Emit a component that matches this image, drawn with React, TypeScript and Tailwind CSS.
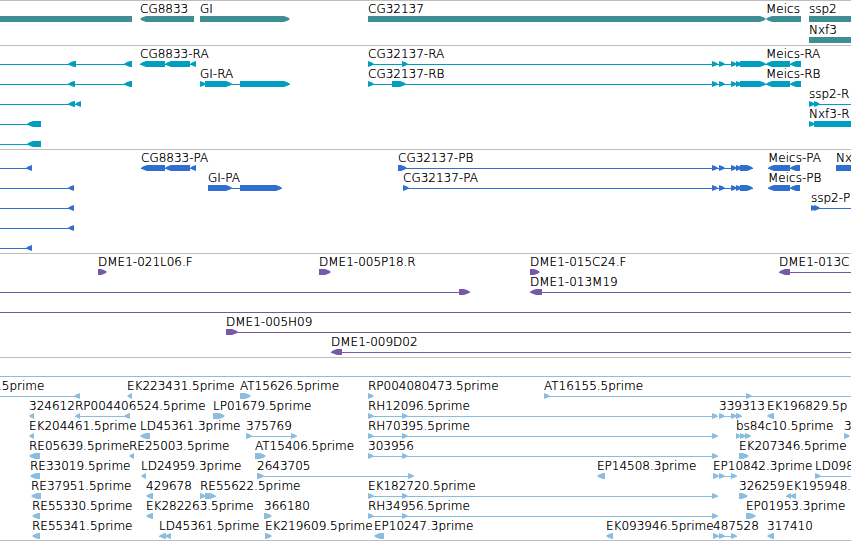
import { memo } from "react";
import clsx from "clsx";

type Exon = [start: number, end: number];

type Feature = {
  name?: string;
  strand: "<" | ">";
  exons: Exon[];
  // the part of the feature that runs past its outermost exons
  from?: number;
  to?: number;
  labelAt?: number;
};

type TrackData = {
  id: string;
  color: string;
  className?: string;
  rows: Feature[][];
};

// anything beyond the visible region is clipped by the row
const LEFT = -20;
const RIGHT = 4000;
const HEAD = 6;

const fwd = (name: string, ...exons: Exon[]): Feature => ({
  name,
  strand: ">",
  exons,
});
const rev = (name: string, ...exons: Exon[]): Feature => ({
  name,
  strand: "<",
  exons,
});
const fromLeft = (...exons: Exon[]): Feature => ({
  strand: "<",
  exons,
  from: LEFT,
});
const through: Feature = { strand: ">", exons: [], from: LEFT, to: RIGHT };

const spliced: Exon[] = [[712, 718], [719, 725], [731, 737], [736, 742]];
const clone: Exon[] = [[368, 374], [402, 408], [712, 718]];

const tracks: TrackData[] = [
  {
    id: "Genes",
    color: "text-[#3e8e93]",
    className: "gap-px",
    rows: [
      [
        { strand: ">", exons: [[LEFT, 132]] },
        rev("CG8833", [140, 194]),
        fwd("GI", [200, 290]),
        fwd("CG32137", [368, 766]),
        rev("Meics", [766, 801]),
        fwd("ssp2", [809, RIGHT]),
      ],
      [fwd("Nxf3", [809, RIGHT])],
    ],
  },
  {
    id: "Transcripts",
    color: "text-[#009fc0]",
    rows: [
      [
        fromLeft([68, 76], [124, 132]),
        rev("CG8833-RA", [140, 165], [165, 190], [190, 196]),
        fwd("CG32137-RA", [368, 374], [402, 408], ...spliced, [740, 766]),
        rev("Meics-RA", [766, 790], [790, 801]),
      ],
      [
        fromLeft([68, 75], [124, 132]),
        fwd("GI-RA", [200, 206], [205, 232], [240, 290]),
        fwd("CG32137-RB", [368, 374], [392, 406], ...spliced, [740, 766]),
        rev("Meics-RB", [766, 790], [790, 801]),
      ],
      [
        fromLeft([68, 75], [75, 81]),
        { ...fwd("ssp2-R", [809, 815], [814, 820]), to: RIGHT },
      ],
      [
        fromLeft([27, 41]),
        fwd("Nxf3-R", [809, 815], [814, RIGHT]),
      ],
      [fromLeft([27, 41])],
    ],
  },
  {
    id: "Proteins",
    color: "text-[#306fcf]",
    rows: [
      [
        fromLeft([26, 32]),
        rev("CG8833-PA", [141, 165], [165, 190], [190, 196]),
        fwd("CG32137-PB", [398, 407], ...spliced, [740, 753]),
        rev("Meics-PA", [768, 790], [790, 800]),
        fwd("Nx", [836, RIGHT]),
      ],
      [
        fromLeft([68, 74]),
        fwd("GI-PA", [208, 232], [240, 282]),
        fwd("CG32137-PA", [403, 409], ...spliced, [740, 753]),
        rev("Meics-PB", [768, 790], [790, 800]),
      ],
      [
        fromLeft([68, 74]),
        { ...fwd("ssp2-P", [811, 817], [814, 820]), to: RIGHT },
      ],
      [fromLeft([68, 74])],
      [fromLeft([26, 32])],
    ],
  },
  {
    id: "BACs",
    color: "text-[#7759a8]",
    rows: [
      [
        fwd("DME1-021L06.F", [98, 107]),
        fwd("DME1-005P18.R", [319, 331]),
        fwd("DME1-015C24.F", [530, 540]),
        { ...rev("DME1-013C", [779, 790]), to: RIGHT },
      ],
      [
        { strand: ">", exons: [[459, 470]], from: LEFT },
        { ...rev("DME1-013M19", [530, 542]), to: RIGHT },
      ],
      [through],
      [{ ...fwd("DME1-005H09", [226, 238]), to: RIGHT }],
      [{ ...rev("DME1-009D02", [331, 342]), to: RIGHT }],
    ],
  },
  {
    id: "ESTs",
    color: "text-[#8abddf]",
    rows: [
      [through],
      [
        { ...fromLeft([74, 80]), name: ".5prime", labelAt: -2 },
        rev("EK223431.5prime", [127, 132]),
        fwd("AT15626.5prime", [240, 251]),
        fwd("RP004080473.5prime", [368, 374]),
        { ...fwd("AT16155.5prime", [544, 550], [746, 752]), to: RIGHT },
      ],
      [
        rev("324612", [29, 34]),
        rev("RP004406524.5prime", [75, 80], [124, 130]),
        fwd("LP01679.5prime", [213, 225]),
        fwd("RH12096.5prime", ...clone),
        fwd("339313", [719, 725], [731, 737], [736, 742]),
        rev("EK196829.5p", [767, 774]),
      ],
      [
        rev("EK204461.5prime", [29, 34]),
        rev("LD45361.3prime", [140, 150]),
        fwd("375769", [246, 252], [291, 297]),
        fwd("RH70395.5prime", ...clone),
        fwd("bs84c10.5prime", [736, 741], [740, 746], [745, 751]),
        fwd("3", [844, 850]),
      ],
      [
        rev("RE05639.5prime", [29, 40]),
        rev("RE25003.5prime", [129, 134]),
        fwd("AT15406.5prime", [255, 266]),
        fwd("303956", ...clone),
        fwd("EK207346.5prime", [739, 749]),
      ],
      [
        rev("RE33019.5prime", [30, 40]),
        rev("LD24959.3prime", [141, 146]),
        fwd("2643705", [257, 264], [408, 414]),
        rev("EP14508.3prime", [597, 605]),
        fwd("EP10842.3prime", [713, 719], [719, 725], [731, 737]),
        { ...fwd("LD098", [815, 821]), to: RIGHT },
      ],
      [
        rev("RE37951.5prime", [31, 41]),
        rev("429678", [146, 153]),
        fwd("RE55622.5prime", [200, 206], [205, 216]),
        fwd("EK182720.5prime", ...clone),
        fwd("326259", [739, 748]),
        rev("EK195948.", [786, 791], [790, 796]),
      ],
      [
        rev("RE55330.5prime", [32, 40]),
        rev("EK282263.5prime", [146, 153]),
        fwd("366180", [264, 272]),
        fwd("RH34956.5prime", ...clone),
        fwd("EP01953.3prime", [746, 756]),
      ],
      [
        rev("RE55341.5prime", [32, 40]),
        rev("LD45361.5prime", [159, 166], [165, 171]),
        fwd("EK219609.5prime", [265, 272]),
        rev("EP10247.3prime", [374, 384]),
        rev("EK093946.5prime", [606, 613]),
        fwd("487528", [713, 719], [719, 725], [731, 737]),
        rev("317410", [767, 774]),
      ],
    ],
  },
];

function exonPoints([start, end]: Exon, strand: Feature["strand"]): string {
  // an exon cut off by the region's edge has no head
  if (start === LEFT) return `${start},0 ${end},0 ${end},6 ${start},6`;
  const head = Math.min(HEAD, end - start);
  return strand === ">"
    ? `${start},0 ${end - head},0 ${end - 2},1.5 ${end},3 ${end - 2},4.5 ${end - head},6 ${start},6`
    : `${end},0 ${start + head},0 ${start + 2},1.5 ${start},3 ${start + 2},4.5 ${start + head},6 ${end},6`;
}

function Glyph({ strand, exons, from, to }: Readonly<Feature>) {
  const start = from ?? exons[0][0];
  const end = to ?? exons[exons.length - 1][1];

  return (
    <g>
      {(exons.length !== 1 || from !== undefined || to !== undefined) && (
        <rect
          x={start}
          y={3}
          width={end - start}
          height={1}
          shapeRendering="crispEdges"
        />
      )}
      {exons.map((exon) => (
        <polygon key={exon[0]} points={exonPoints(exon, strand)} />
      ))}
    </g>
  );
}

function Row({ features }: Readonly<{ features: Feature[] }>) {
  return (
    <li className="overflow-hidden">
      <div className="relative h-3.5">
        {features.map(({ name, labelAt, exons }) =>
          name && (
            <span
              key={name}
              className="absolute top-0 whitespace-nowrap"
              style={{ left: labelAt ?? exons[0][0] }}
            >
              {name}
            </span>
          )
        )}
      </div>
      <svg className="block h-1.5 w-full fill-current" aria-hidden="true">
        <g className="fill-current">
          {features.map((feature, i) => <Glyph key={i} {...feature} />)}
        </g>
      </svg>
    </li>
  );
}

const Track = memo(function Track(
  { id, color, className, rows }: Readonly<TrackData>,
) {
  return (
    <section
      aria-label={id}
      className="border-t border-[#bebebe] pt-px pb-0.5 last:pb-px"
    >
      <ul
        className={clsx(
          "flex flex-col [&_span]:text-black [&_span]:[text-shadow:0_0_0_#000]",
          color,
          className,
        )}
      >
        {rows.map((features, i) => <Row key={i} features={features} />)}
      </ul>
    </section>
  );
});

export default function App() {
  return (
    <main className="overflow-hidden border-b border-[#bebebe] bg-white font-['DejaVu_Sans',sans-serif] text-[12px] leading-[14px] font-extralight">
      {tracks.map((track) => <Track key={track.id} {...track} />)}
    </main>
  );
}
